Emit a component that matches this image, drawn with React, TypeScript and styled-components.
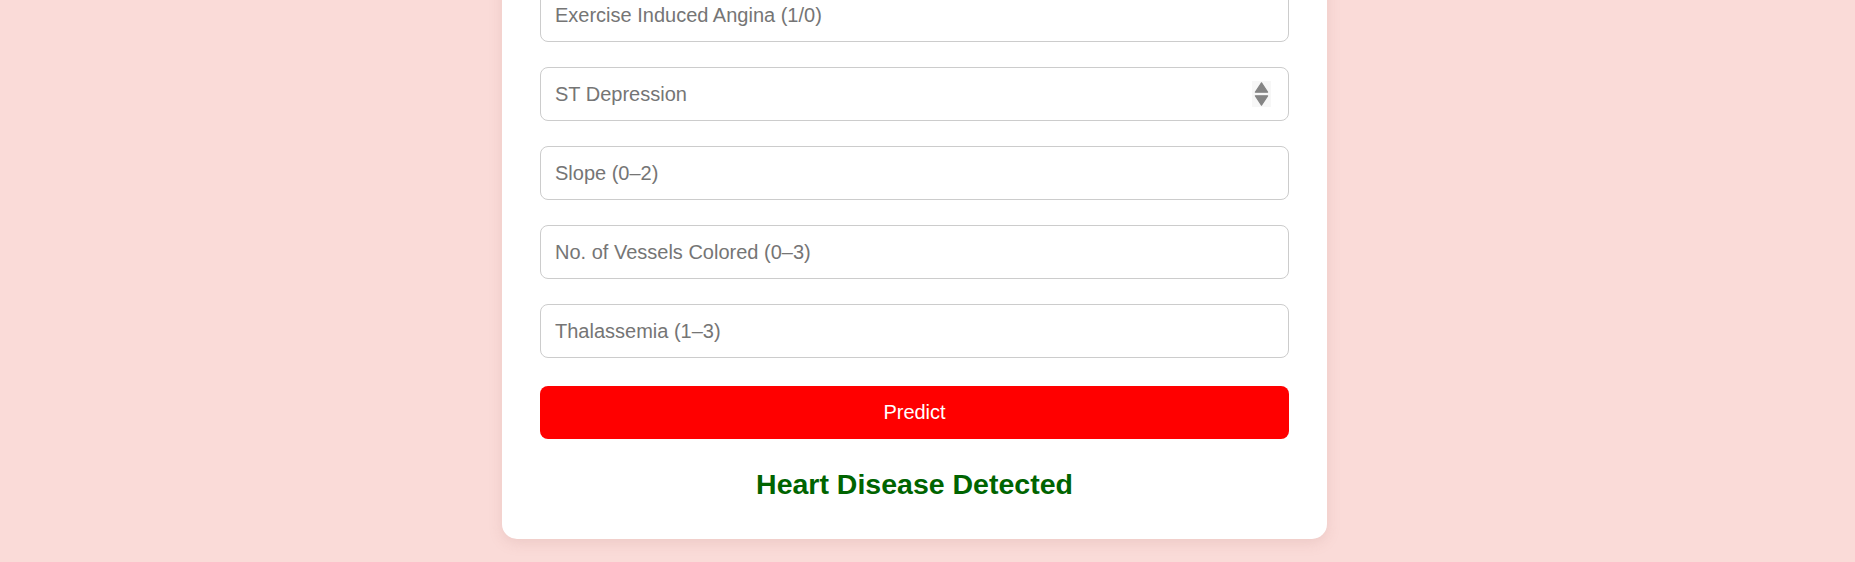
import React from "react";
import styled, { createGlobalStyle } from "styled-components";

const GlobalStyle = createGlobalStyle`
  html, body {
    margin: 0;
    padding: 0;
    background: #fadbd8;
    font-family: "Liberation Sans", Arial, sans-serif;
  }
  * { box-sizing: border-box; }
`;

const Page = styled.div`
  height: 562px;
  overflow: hidden;
  display: flex;
  flex-direction: column;
  justify-content: flex-end;
  align-items: center;
  padding: 0 26px 23px 0;
  background: #fadbd8;
`;

const Card = styled.div`
  width: 825px;
  flex-shrink: 0;
  background: #ffffff;
  border-radius: 15px;
  padding: 38px;
  box-shadow: 0 4px 14px rgba(180, 120, 115, 0.18);
`;

const Title = styled.h2`
  margin: 0 0 25px;
  text-align: center;
  color: #cc0000;
  font-size: 28px;
`;

const Form = styled.form`
  display: flex;
  flex-direction: column;
  gap: 25px;
`;

const FieldWrap = styled.div`
  position: relative;
`;

const Input = styled.input`
  display: block;
  width: 100%;
  height: 54px;
  padding: 0 14px;
  border: 1px solid #cccccc;
  border-radius: 8px;
  font-family: "Liberation Sans", Arial, sans-serif;
  font-size: 20px;
  color: #222;
  background: #fff;
  outline: none;
  -moz-appearance: textfield;
  &::placeholder {
    color: #757575;
  }
  &::-webkit-inner-spin-button,
  &::-webkit-outer-spin-button {
    -webkit-appearance: none;
    margin: 0;
  }
`;

const Spinner = styled.svg`
  position: absolute;
  right: 18px;
  top: 50%;
  transform: translateY(-50%);
  background: #f7f7f7;
  pointer-events: none;
`;

const Button = styled.button`
  margin-top: 3px;
  height: 53px;
  width: 100%;
  border: none;
  border-radius: 8px;
  background: #ff0000;
  color: #ffffff;
  font-family: "Liberation Sans", Arial, sans-serif;
  font-size: 20px;
  cursor: pointer;
`;

const Result = styled.h3`
  margin: 29px 0 0;
  text-align: center;
  color: #006400;
  font-size: 28.5px;
  line-height: 33px;
  font-weight: bold;
`;

type Field = { name: string; placeholder: string; spinner?: boolean };

const fields: Field[] = [
  { name: "age", placeholder: "Age" },
  { name: "sex", placeholder: "Sex (1 = Male, 0 = Female)" },
  { name: "cp", placeholder: "Chest Pain Type (0–3)" },
  { name: "trestbps", placeholder: "Resting Blood Pressure" },
  { name: "chol", placeholder: "Cholesterol" },
  { name: "fbs", placeholder: "Fasting Blood Sugar (1/0)" },
  { name: "restecg", placeholder: "Resting ECG (0–2)" },
  { name: "thalach", placeholder: "Max Heart Rate" },
  { name: "exang", placeholder: "Exercise Induced Angina (1/0)" },
  { name: "oldpeak", placeholder: "ST Depression", spinner: true },
  { name: "slope", placeholder: "Slope (0–2)" },
  { name: "ca", placeholder: "No. of Vessels Colored (0–3)" },
  { name: "thal", placeholder: "Thalassemia (1–3)" },
];

const SpinIcon = () => (
  <Spinner width="19" height="26" viewBox="0 0 19 26">
    <path
      d="M9.5 1.8 L15.6 11.2 L3.4 11.2 Z"
      fill="#858585"
      stroke="#858585"
      strokeWidth="1.2"
      strokeLinejoin="round"
    />
    <path
      d="M3.4 14.8 L15.6 14.8 L9.5 24.2 Z"
      fill="#858585"
      stroke="#858585"
      strokeWidth="1.2"
      strokeLinejoin="round"
    />
  </Spinner>
);

export default function App() {
  return (
    <>
      <GlobalStyle />
      <Page>
        <Card>
          <Title>Heart Disease Prediction</Title>
          <Form onSubmit={(e) => e.preventDefault()}>
            {fields.map((f) => (
              <FieldWrap key={f.name}>
                <Input
                  type={f.spinner ? "number" : "text"}
                  name={f.name}
                  placeholder={f.placeholder}
                />
                {f.spinner && <SpinIcon />}
              </FieldWrap>
            ))}
            <Button type="submit">Predict</Button>
          </Form>
          <Result>Heart Disease Detected</Result>
        </Card>
      </Page>
    </>
  );
}
